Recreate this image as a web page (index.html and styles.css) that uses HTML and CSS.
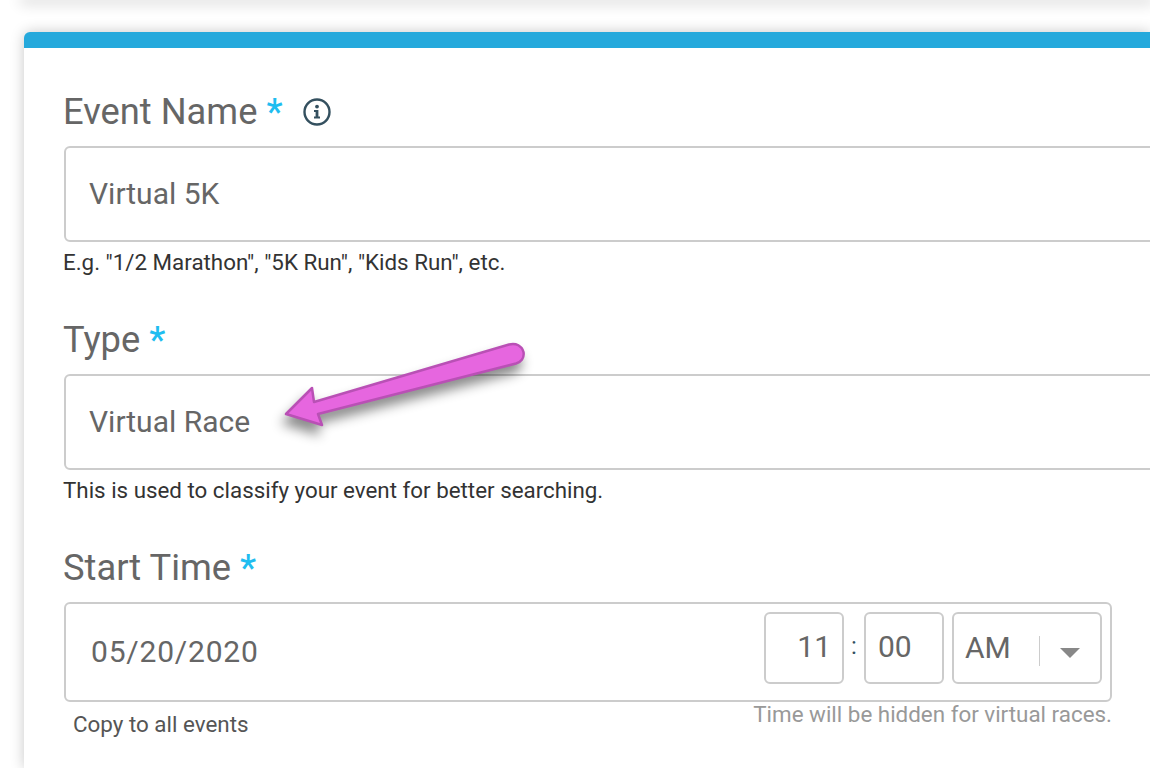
FILE: index.html
```html
<!DOCTYPE html>
<html lang="en">

<head>
  <meta charset="UTF-8">
  <title>Event Details</title>
  <link rel="stylesheet" href="styles.css">
</head>

<body>
  <div class="top-bar"></div>
  <div class="card">
    <div class="field">
      <label class="label">Event Name <span class="req">*</span>
        <svg class="info" viewBox="0 0 28 28" width="28" height="28">
          <circle cx="14" cy="14" r="12.5" fill="none" stroke="#34505f" stroke-width="2.4" />
          <circle cx="14" cy="8.6" r="1.9" fill="#34505f" />
          <path d="M11 12h4.4v6.6H17v1.9h-6v-1.9h1.6v-4.7H11z" fill="#34505f" />
        </svg>
      </label>
      <div class="input">Virtual 5K</div>
      <div class="help">E.g. "1/2 Marathon", "5K Run", "Kids Run", etc.</div>
    </div>
    <div class="field">
      <label class="label">Type <span class="req">*</span></label>
      <div class="input">Virtual Race</div>
      <div class="help">This is used to classify your event for better searching.</div>
    </div>
    <div class="field start-time">
      <label class="label">Start Time <span class="req">*</span></label>
      <div class="date-box">
        <span class="date">05/20/2020</span>
        <div class="time">
          <div class="time-cell hour">11</div>
          <span class="colon">:</span>
          <div class="time-cell minute">00</div>
          <div class="ampm">
            <span>AM</span>
            <i class="sep"></i>
            <i class="caret"></i>
          </div>
        </div>
      </div>
      <div class="below">
        <span class="copy">Copy to all events</span>
        <span class="hint">Time will be hidden for virtual races.</span>
      </div>
    </div>
  </div>

  <svg class="arrow" viewBox="0 0 270 110" width="270" height="110">
    <path d="M234 4.500 C241 2.500 247 6 248.500 12 C249.500 18 246 22 241 23.500 L43 74 L47 85 L11 74 L37 48 L39 62 Z"
      fill="#e666df" stroke="#b950b5" stroke-width="2.500" stroke-linejoin="round" />
  </svg>
</body>

</html>
```

FILE: styles.css
```css
html,
body {
  height: 100%;
}

body {
  margin: 0;
  overflow: hidden;
  background: #fff;
  font-family: Roboto, sans-serif;
  color: #666;
}

.top-bar {
  height: 0;
  margin-left: 24px;
  box-shadow: 0 0 14px 4px rgba(0, 0, 0, 0.16);
}

.card {
  width: 1126px;
  height: 736px;
  margin: 32px 0 0 24px;
  padding: 36px 0 0 40px;
  box-sizing: border-box;
  overflow: hidden;
  background: #fff;
  border-top: 16px solid #25a9dc;
  border-radius: 6px 0 0 0;
  box-shadow: 0 0 14px rgba(0, 0, 0, 0.22);
}

.field {
  width: 1100px;
  margin-bottom: 38px;
}

.label {
  display: flex;
  align-items: center;
  gap: 9px;
  height: 54px;
  padding-top: 2px;
  box-sizing: border-box;
  margin-left: -1px;
  font-size: 36.3px;
  line-height: 52px;
  color: #666;
}

.req {
  color: #1fbdf0;
  font-weight: 500;
}

.info {
  margin-left: 11px;
}

.input {
  height: 96px;
  padding: 0 23px;
  margin-top: 8px;
  box-sizing: border-box;
  border: 2px solid #ccc;
  border-radius: 6px;
  font-size: 30px;
  line-height: 92px;
}

.help {
  margin: 8px 0 0 -1px;
  font-size: 22.35px;
  line-height: 24px;
  color: #333;
}

.date-box {
  display: flex;
  align-items: center;
  justify-content: space-between;
  width: 1048px;
  height: 100px;
  margin-top: 8px;
  padding: 0 8px 0 25px;
  box-sizing: border-box;
  border: 2px solid #ccc;
  border-radius: 6px;
  font-size: 30px;
}

.date {
  margin-top: -2px;
  letter-spacing: 0.8px;
}

.time {
  display: flex;
  align-items: center;
  margin-top: -8px;
}

.time-cell,
.ampm {
  height: 72px;
  box-sizing: border-box;
  border: 2px solid #ccc;
  border-radius: 6px;
  line-height: 66px;
}

.time-cell {
  width: 80px;
}

.hour {
  padding-right: 11px;
  text-align: right;
}

.minute {
  padding-left: 12px;
}

.colon {
  width: 20px;
  margin-top: -4px;
  text-align: center;
  font-size: 24px;
  color: #34505f;
}

.ampm {
  display: flex;
  align-items: center;
  width: 150px;
  margin-left: 8px;
  padding-left: 11px;
}

.sep {
  width: 1px;
  height: 30px;
  margin: 6px 0 0 28px;
  background: #ccc;
}

.caret {
  margin: 9px 0 0 20px;
  border-top: 10px solid #888;
  border-left: 10px solid transparent;
  border-right: 10px solid transparent;
}

.below {
  display: flex;
  justify-content: space-between;
  width: 1048px;
}

.copy {
  margin: 10px 0 0 9px;
  font-size: 22.4px;
  line-height: 24px;
  color: #555;
}

.hint {
  font-size: 22.4px;
  line-height: 24px;
  color: #999;
}

/* annotation drawn on top of the form */
.arrow {
  position: absolute;
  left: 275px;
  top: 340px;
  filter: drop-shadow(-3px 9px 6px rgba(0, 0, 0, 0.45));
}
```
